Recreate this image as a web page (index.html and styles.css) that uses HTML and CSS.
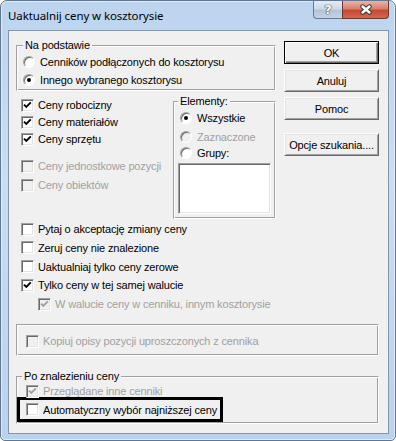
FILE: index.html
```html
<!DOCTYPE html>
<html lang="pl">
<head>
    <meta charset="UTF-8">
    <title>Uaktualnij ceny w kosztorysie</title>
    <link rel="stylesheet" href="styles.css">
</head>
<body>

    <div class="window">
        <!-- Title bar -->
        <div class="titlebar">
            <span class="title">Uaktualnij ceny w kosztorysie</span>
            <div class="caption">
                <span class="cap-help">?</span>
                <span class="cap-close">
                    <svg width="14" height="11" viewBox="0 0 14 11">
                        <path d="M3.5 2.5 L10.5 8.5 M10.5 2.5 L3.5 8.5" stroke="#3a3a3a" stroke-width="4.4" stroke-linecap="round"/>
                        <path d="M3.5 2.5 L10.5 8.5 M10.5 2.5 L3.5 8.5" stroke="#ffffff" stroke-width="2.4" stroke-linecap="round"/>
                    </svg>
                </span>
            </div>
        </div>

        <!-- Dialog body -->
        <div class="client">
            <div class="top">
                <div class="left">
                    <fieldset class="group basis">
                        <legend>Na podstawie</legend>
                        <label class="opt"><span class="radio"></span>Cenników podłączonych do kosztorysu</label>
                        <label class="opt"><span class="radio on"></span>Innego wybranego kosztorysu</label>
                    </fieldset>

                    <div class="middle">
                        <div class="prices">
                            <div class="stack">
                                <label class="check"><span class="box"><svg viewBox="0 0 11 11"><path d="M2 4.6 L4.3 6.9 L8.8 2.4"/></svg></span>Ceny robocizny</label>
                                <label class="check"><span class="box"><svg viewBox="0 0 11 11"><path d="M2 4.6 L4.3 6.9 L8.8 2.4"/></svg></span>Ceny materiałów</label>
                                <label class="check"><span class="box"><svg viewBox="0 0 11 11"><path d="M2 4.6 L4.3 6.9 L8.8 2.4"/></svg></span>Ceny sprzętu</label>
                            </div>
                            <div class="stack loose">
                                <label class="check off"><span class="box"></span>Ceny jednostkowe pozycji</label>
                                <label class="check off"><span class="box"></span>Ceny obiektów</label>
                            </div>
                        </div>

                        <fieldset class="group elements">
                            <legend>Elementy:</legend>
                            <label class="opt first"><span class="radio on"></span>Wszystkie</label>
                            <label class="opt second off"><span class="radio"></span>Zaznaczone</label>
                            <label class="opt"><span class="radio"></span>Grupy:</label>
                            <div class="listbox"></div>
                        </fieldset>
                    </div>

                    <div class="options">
                        <label class="check"><span class="box"></span>Pytaj o akceptację zmiany ceny</label>
                        <label class="check"><span class="box"></span>Zeruj ceny nie znalezione</label>
                        <label class="check"><span class="box"></span>Uaktualniaj tylko ceny zerowe</label>
                        <label class="check"><span class="box"><svg viewBox="0 0 11 11"><path d="M2 4.6 L4.3 6.9 L8.8 2.4"/></svg></span>Tylko ceny w tej samej walucie</label>
                        <label class="check off sub"><span class="box"><svg viewBox="0 0 11 11"><path d="M2 4.6 L4.3 6.9 L8.8 2.4"/></svg></span>W walucie ceny w cenniku, innym kosztorysie</label>
                    </div>
                </div>

                <div class="buttons">
                    <button class="btn default">OK</button>
                    <button class="btn">Anuluj</button>
                    <button class="btn">Pomoc</button>
                    <button class="btn search">Opcje szukania....</button>
                </div>
            </div>

            <fieldset class="group copy">
                <label class="check off"><span class="box"></span>Kopiuj opisy pozycji uproszczonych z cennika</label>
            </fieldset>

            <fieldset class="group found">
                <legend>Po znalezieniu ceny</legend>
                <label class="check off browsed"><span class="box"><svg viewBox="0 0 11 11"><path d="M2 4.6 L4.3 6.9 L8.8 2.4"/></svg></span>Przeglądane inne cenniki</label>
                <div class="highlight">
                    <label class="check"><span class="box"></span>Automatyczny wybór najniższej ceny</label>
                </div>
            </fieldset>
        </div>
    </div>

</body>
</html>
```

FILE: styles.css
```css
body {
    margin: 0;
    font-family: 'Liberation Sans', Arial, sans-serif;
    font-size: 11px;
    letter-spacing: -0.15px;
    color: #000000;
    background-color: #ffffff;
}

/* Window frame */
.window {
    width: 396px;
    height: 441px;
    box-sizing: border-box;
    border: 1px solid #62778f;
    border-radius: 7px 7px 5px 5px;
    background: linear-gradient(180deg, #bcd4ee 0%, #c9def4 40%, #b9d2ee 100%);
    box-shadow: inset 0 0 0 1px rgba(255, 255, 255, 0.55);
    padding: 0 6px 6px 7px;
    display: flex;
    flex-direction: column;
}

.titlebar {
    height: 29px;
    display: flex;
    justify-content: space-between;
    align-items: flex-start;
}

.title {
    font-family: 'Noto Sans', 'Open Sans', sans-serif;
    font-size: 11.5px;
    letter-spacing: -0.1px;
    line-height: 16px;
    margin-top: 7px;
    color: #000000;
}

.caption {
    display: flex;
    height: 18px;
}

.cap-help,
.cap-close {
    height: 18px;
    box-sizing: border-box;
    display: flex;
    justify-content: center;
    align-items: center;
    border: 1px solid #6a7b90;
    border-top: none;
}

.cap-help {
    width: 29px;
    border-right: none;
    border-radius: 0 0 0 4px;
    background: linear-gradient(180deg, #e4ecf5 0%, #cdd9e7 45%, #b4c4d7 55%, #c5d4e4 100%);
    color: #ffffff;
    font-family: 'DejaVu Sans', sans-serif;
    font-weight: bold;
    font-size: 13px;
    text-shadow: 0 0 1px #2f3c4c, 0 0 1px #2f3c4c, 0 0 1px #2f3c4c;
}

.cap-close {
    width: 47px;
    border-color: #6b3a33;
    border-radius: 0 0 4px 0;
    background: linear-gradient(180deg, #eab4a8 0%, #d9806d 45%, #c64a33 55%, #d5664c 100%);
}

/* Client area */
.client {
    height: 404px;
    box-sizing: border-box;
    border: 1px solid #8496ab;
    background-color: #f0f0f0;
    padding: 8px 9px 0 7px;
}

.top {
    display: flex;
    align-items: flex-start;
}

.left {
    width: 260px;
}

/* Group boxes */
.group {
    margin: 0;
    min-width: 0;
    border: 1px solid;
    border-color: #a0a0a0 #ffffff #ffffff #a0a0a0;
    box-shadow: inset 1px 1px 0 #ffffff, inset -1px -1px 0 #a0a0a0;
}

.group legend {
    padding: 0 2px;
    height: 13px;
    line-height: 13px;
    background-color: #f0f0f0;
}

.basis {
    padding: 1px 0 1px 6px;
}

.opt {
    display: flex;
    align-items: center;
    height: 18px;
    white-space: nowrap;
}

.middle {
    display: flex;
    justify-content: space-between;
    align-items: flex-start;
    margin-top: 4px;
}

.prices {
    padding: 2px 0 0 5px;
}

.stack {
    display: flex;
    flex-direction: column;
    gap: 1px;
}

.stack.loose {
    margin-top: 11px;
    gap: 3px;
}

.elements {
    width: 103px;
    box-sizing: border-box;
    padding: 0 4px 4px 4px;
}

.elements .opt {
    height: 16px;
    padding-left: 2px;
}

.elements .first {
    margin-top: 2px;
}

.elements .second {
    margin-top: 3px;
}

.listbox {
    margin-top: 2px;
    height: 51px;
    box-sizing: border-box;
    background-color: #ffffff;
    border: 1px solid;
    border-color: #a0a0a0 #ffffff #ffffff #a0a0a0;
    box-shadow: inset 1px 1px 0 #696969, inset -1px -1px 0 #e3e3e3;
}

.options {
    display: flex;
    flex-direction: column;
    gap: 2.75px;
    margin-top: 2px;
    padding-left: 5px;
}

.options .sub {
    padding-left: 17px;
}

/* Check boxes and radios */
.check {
    display: flex;
    align-items: center;
    height: 16px;
    white-space: nowrap;
}

.box {
    width: 13px;
    height: 13px;
    flex: none;
    box-sizing: border-box;
    margin-right: 4px;
    background-color: #ffffff;
    border: 1px solid;
    border-color: #a0a0a0 #ffffff #ffffff #a0a0a0;
    box-shadow: inset 1px 1px 0 #696969, inset -1px -1px 0 #e3e3e3;
}

.box svg {
    display: block;
    width: 11px;
    height: 11px;
    fill: none;
    stroke: #000000;
    stroke-width: 1.9;
}

.radio {
    width: 12px;
    height: 12px;
    flex: none;
    box-sizing: border-box;
    margin-right: 5px;
    border-radius: 50%;
    background-color: #ffffff;
    border: 1px solid;
    border-color: #a0a0a0 #ffffff #ffffff #a0a0a0;
    box-shadow: inset 1px 1px 0 #696969;
    display: flex;
    justify-content: center;
    align-items: center;
}

.radio.on::after {
    content: "";
    width: 4px;
    height: 4px;
    border-radius: 50%;
    background-color: #000000;
}

/* Disabled state */
.off {
    color: #a0a0a0;
}

.off .box,
.off .radio {
    background-color: #f0f0f0;
}

.off .box svg {
    stroke: #a0a0a0;
}

/* Buttons */
.buttons {
    width: 95px;
    margin-left: 8px;
    padding-top: 2px;
    display: flex;
    flex-direction: column;
    gap: 5px;
}

.btn {
    height: 23px;
    width: 95px;
    padding: 0;
    box-sizing: border-box;
    font-family: 'Liberation Sans', Arial, sans-serif;
    font-size: 11px;
    letter-spacing: -0.15px;
    color: #000000;
    background-color: #f0f0f0;
    border: 1px solid;
    border-color: #ffffff #696969 #696969 #ffffff;
    box-shadow: inset 1px 1px 0 #e3e3e3, inset -1px -1px 0 #a0a0a0;
}

.btn.default {
    border-color: #000000;
    box-shadow: inset 1px 1px 0 #ffffff, inset -1px -1px 0 #696969, inset -2px -2px 0 #a0a0a0;
}

.btn.search {
    margin-top: 8px;
}

/* Lower group boxes */
.copy {
    margin-top: 12px;
    padding: 8px 9px 6px;
}

.found {
    margin-top: 14px;
    padding: 0 0 1px 0;
}

.found legend {
    margin-left: 5px;
}

.found .browsed {
    padding-left: 9px;
}

.highlight {
    width: 206px;
    height: 25px;
    box-sizing: border-box;
    margin-top: -2px;
    border: 3px solid #000000;
    padding-left: 6px;
    display: flex;
    align-items: center;
}
```
